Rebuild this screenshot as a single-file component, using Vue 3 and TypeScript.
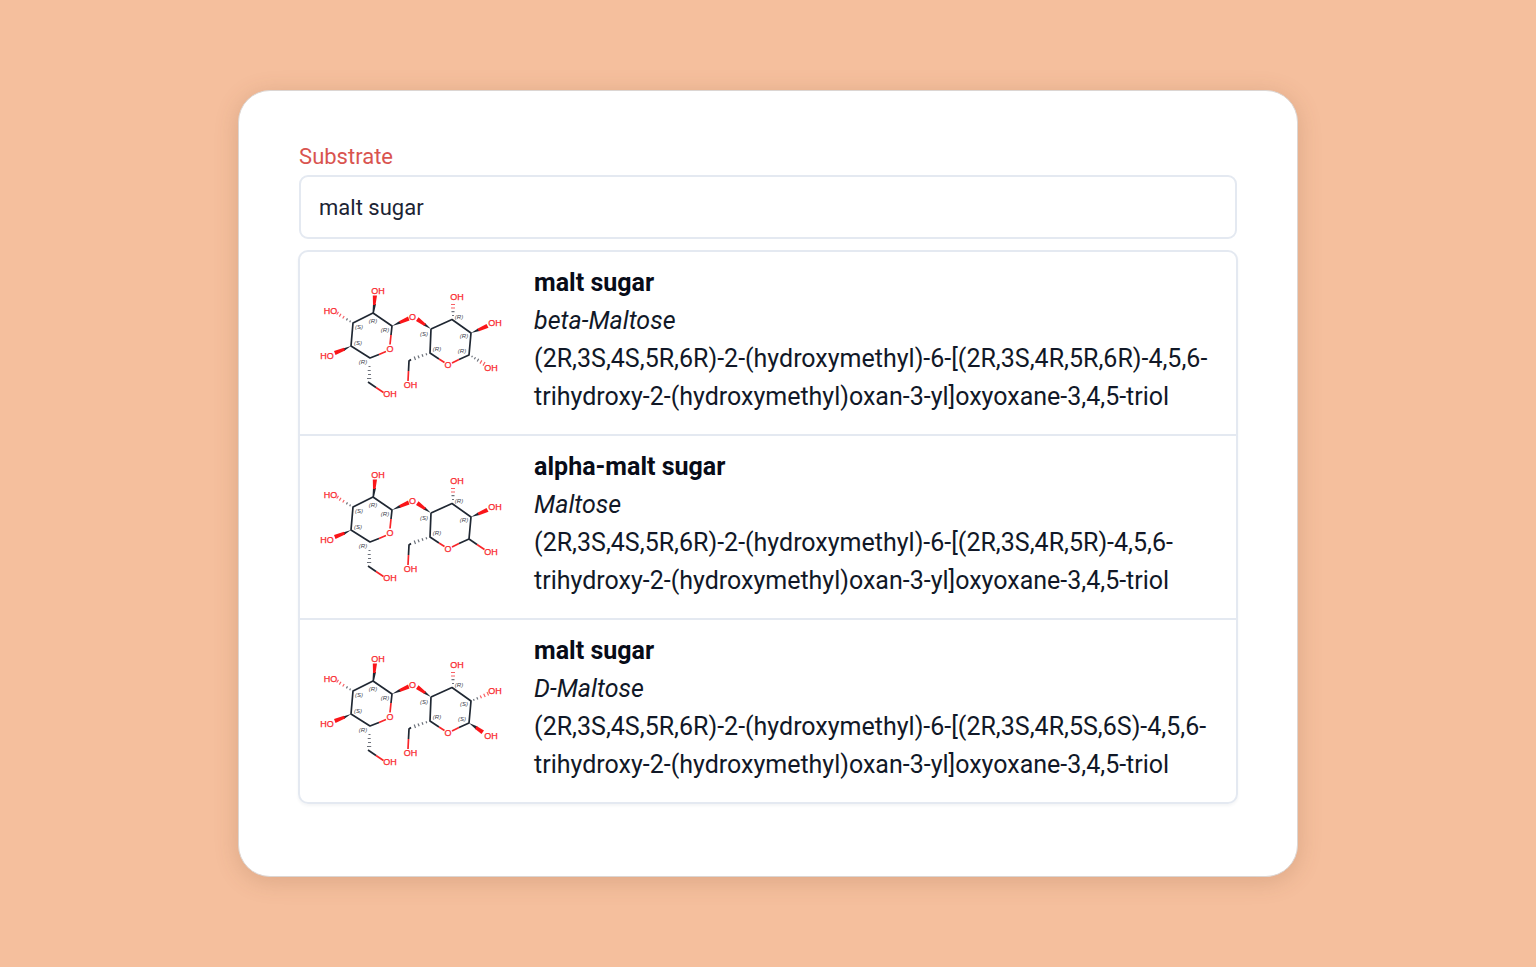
<script setup lang="ts">
import { ref } from 'vue'

type Bond = 'hash' | 'wedge' | 'plain'

interface Substrate {
  id: number
  name: string
  synonym: string
  iupac: string
  upperBond: Bond
  lowerBond: Bond
  upperLabel: string
  lowerLabel: string
}

const query = ref('malt sugar')
const selected = ref<number | null>(null)

const results: Substrate[] = [
  {
    id: 1,
    name: 'malt sugar',
    synonym: 'beta-Maltose',
    iupac: '(2R,3S,4S,5R,6R)-2-(hydroxymethyl)-6-[(2R,3S,4R,5R,6R)-4,5,6-trihydroxy-2-(hydroxymethyl)oxan-3-yl]oxyoxane-3,4,5-triol',
    upperBond: 'wedge',
    lowerBond: 'hash',
    upperLabel: '(R)',
    lowerLabel: '(R)',
  },
  {
    id: 2,
    name: 'alpha-malt sugar',
    synonym: 'Maltose',
    iupac: '(2R,3S,4S,5R,6R)-2-(hydroxymethyl)-6-[(2R,3S,4R,5R)-4,5,6-trihydroxy-2-(hydroxymethyl)oxan-3-yl]oxyoxane-3,4,5-triol',
    upperBond: 'wedge',
    lowerBond: 'plain',
    upperLabel: '(R)',
    lowerLabel: '',
  },
  {
    id: 3,
    name: 'malt sugar',
    synonym: 'D-Maltose',
    iupac: '(2R,3S,4S,5R,6R)-2-(hydroxymethyl)-6-[(2R,3S,4R,5S,6S)-4,5,6-trihydroxy-2-(hydroxymethyl)oxan-3-yl]oxyoxane-3,4,5-triol',
    upperBond: 'hash',
    lowerBond: 'wedge',
    upperLabel: '(S)',
    lowerLabel: '(S)',
  },
]
</script>

<template>
  <main class="page">
    <section class="card">
      <div class="control">
        <label class="label" for="substrate">Substrate</label>
        <input id="substrate" v-model="query" class="field" type="text" autocomplete="off" />
      </div>
      <ul class="results" role="listbox" aria-label="Substrate">
        <li
          v-for="item in results"
          :key="item.id"
          class="result"
          role="option"
          :aria-selected="selected === item.id"
          @click="selected = item.id"
        >
          <svg class="molecule" viewBox="0 0 200 135" width="200" height="135" aria-hidden="true">
            <!-- carbon skeleton -->
            <path
              class="carbon"
              d="M81 60L82 51L63 38L43 48L41 71L60 83L69 79.500M58 107L66 112.500M121 54L142 44.500L161 58L159 80L149 84.500M121 54L120 78L129 84M101 84.500L99 86L98.500 96"
            />
            <path
              class="oxygen"
              d="M81 60L80 69.500M69 79.500L76 76.500M66 112.500L73.500 117.500M149 84.500L142 88M129 84L134.500 87.500M98.500 96L98 106"
            />
            <!-- solid wedges -->
            <path class="wedge-dark" d="M62.500 38L63 29L66 29L64 38ZM41 71L33 73.500L34 76ZM82 51L89.500 46L91 48.500ZM121 54L113.500 50.500L115 48Z" />
            <path class="wedge" d="M63 30L62.800 20.500L67 20.500L65.500 30ZM34 72.800L24 76L25.500 80L35 75.600ZM89 46.300L98 41.500L99.500 45.500L90.500 48.800ZM114 50.800L106 46L108.500 42.300L116 49Z" />
            <!-- hashed bonds -->
            <path class="hash-dark" d="M40.500 45.500L39.700 47.200M37.500 43.400L36.400 45.400M58 99.500H61M57.700 95.500H60.700M58.500 91.500H60.500M57 103.500H61.200M142 40.500H144M141.500 36.700H144.500M116 78.300L116.800 80.200M112 79.200L113 81.800M108 80.400L109.200 83.200M104.200 81.500L105.500 85" />
            <path class="hash" d="M34.200 41L32.700 43.500M31 38.800L29.300 41.600M28.500 36.800L26.700 39.500M141 33H145M141 29.500H145" />

            <template v-if="item.upperBond === 'wedge'">
              <path class="wedge-dark" d="M161 58L168 53.500L169.500 56Z" />
              <path class="wedge" d="M167.500 53.800L176.500 49L178.500 52.700L169 56.200Z" />
            </template>
            <template v-else>
              <path class="hash-dark" d="M163.500 56L164.200 57.800M166.800 54.200L167.800 56.600" />
              <path class="hash" d="M170.200 52.500L171.500 55.300M173.700 50.800L175.200 54M177 49L178.600 52.500" />
            </template>

            <template v-if="item.lowerBond === 'hash'">
              <path class="hash-dark" d="M162.500 80.800L161.600 82.300M165.500 82.200L164.300 84.300M168.700 83.800L167.200 86.500" />
              <path class="hash" d="M171.800 85.400L170 88.600M175 87L173 90.600" />
            </template>
            <template v-else-if="item.lowerBond === 'plain'">
              <path class="carbon" d="M159 80L167 85.500" />
              <path class="oxygen" d="M167 85.500L174.500 90.500" />
            </template>
            <template v-else>
              <path class="wedge-dark" d="M159 80L167.500 83.500L166 86.500Z" />
              <path class="wedge" d="M166.500 83L174 87.500L171.500 91L165.200 86Z" />
            </template>

            <g class="atoms">
              <text x="68" y="19">OH</text>
              <text x="20.500" y="39">HO</text>
              <text x="17" y="84">HO</text>
              <text x="80" y="122">OH</text>
              <text x="80" y="77">O</text>
              <text x="102.500" y="45">O</text>
              <text x="147" y="25">OH</text>
              <text x="185" y="51">OH</text>
              <text x="181" y="96">OH</text>
              <text x="138" y="93">O</text>
              <text x="100.500" y="113">OH</text>
            </g>
            <g class="stereo">
              <text x="49" y="54">(S)</text>
              <text x="63" y="48">(R)</text>
              <text x="75" y="57">(R)</text>
              <text x="48" y="70">(S)</text>
              <text x="53" y="89">(R)</text>
              <text x="149" y="44">(R)</text>
              <text x="114" y="61">(S)</text>
              <text x="154" y="63">{{ item.upperLabel }}</text>
              <text x="127" y="76">(R)</text>
              <text v-if="item.lowerLabel" x="152" y="78">{{ item.lowerLabel }}</text>
            </g>
          </svg>
          <div class="details">
            <strong class="name">{{ item.name }}</strong>
            <em class="synonym">{{ item.synonym }}</em>
            <span class="iupac">{{ item.iupac }}</span>
          </div>
        </li>
      </ul>
    </section>
  </main>
</template>

<style>
body {
  margin: 0;
  background: #f5bf9d;
}
</style>

<style scoped>
.page {
  box-sizing: border-box;
  min-height: 100vh;
  padding: 90px 15.5%;
  background: #f5bf9d;
  font-family: Roboto, "Liberation Sans", sans-serif;
  color: #111827;
}

.card {
  box-sizing: border-box;
  padding: 52px 59px 72px;
  border: 1px solid #dcd6d3;
  border-radius: 32px;
  background: #fff;
  box-shadow: 0 4px 24px rgba(120, 70, 40, 0.2);
}

.control {
  padding: 0 1px;
}

.label {
  display: block;
  font-size: 22px;
  line-height: 28px;
  margin-bottom: 4px;
  color: #d9544f;
}

.field {
  display: block;
  box-sizing: border-box;
  width: 100%;
  height: 64px;
  padding: 0 18px;
  border: 2px solid #e4e9f1;
  border-radius: 9px;
  outline: none;
  background: #fff;
  font-family: inherit;
  font-size: 22px;
  color: #1c2333;
}

.results {
  margin: 11px 0 0;
  padding: 0;
  list-style: none;
  border: 2px solid #e4e9f1;
  border-radius: 10px;
  box-shadow: 0 2px 3px rgba(30, 50, 80, 0.05);
}

.result {
  display: flex;
  align-items: flex-start;
  gap: 24px;
  padding: 12px 20px 18px 10px;
  cursor: pointer;
}

.result + .result {
  border-top: 2px solid #e4e9f1;
}

.molecule {
  flex: none;
  margin-top: 11px;
}

.details {
  flex: 1;
  min-width: 0;
  display: flex;
  flex-direction: column;
  font-size: 25px;
  line-height: 38px;
}

.name {
  font-weight: 700;
  color: #080c18;
}

.synonym {
  font-style: italic;
}

.carbon,
.oxygen,
.hash,
.hash-dark {
  fill: none;
  stroke-width: 1.7;
  stroke-linejoin: round;
}

.carbon {
  stroke: #202833;
}

.oxygen {
  stroke: #f8262a;
}

.hash,
.hash-dark {
  stroke-width: 1.2;
}

.hash {
  stroke: #f86064;
}

.hash-dark {
  stroke: #6d727b;
}

.wedge {
  fill: #fa1519;
}

.wedge-dark {
  fill: #202833;
}

.atoms text {
  font-family: "Liberation Sans", Arial, sans-serif;
  font-size: 9px;
  text-anchor: middle;
  fill: #f9282d;
  stroke: #f9282d;
  stroke-width: 0.25;
}

.stereo text {
  font-family: "Liberation Sans", Arial, sans-serif;
  font-size: 6px;
  font-style: italic;
  text-anchor: middle;
  fill: #3c424d;
}
</style>
